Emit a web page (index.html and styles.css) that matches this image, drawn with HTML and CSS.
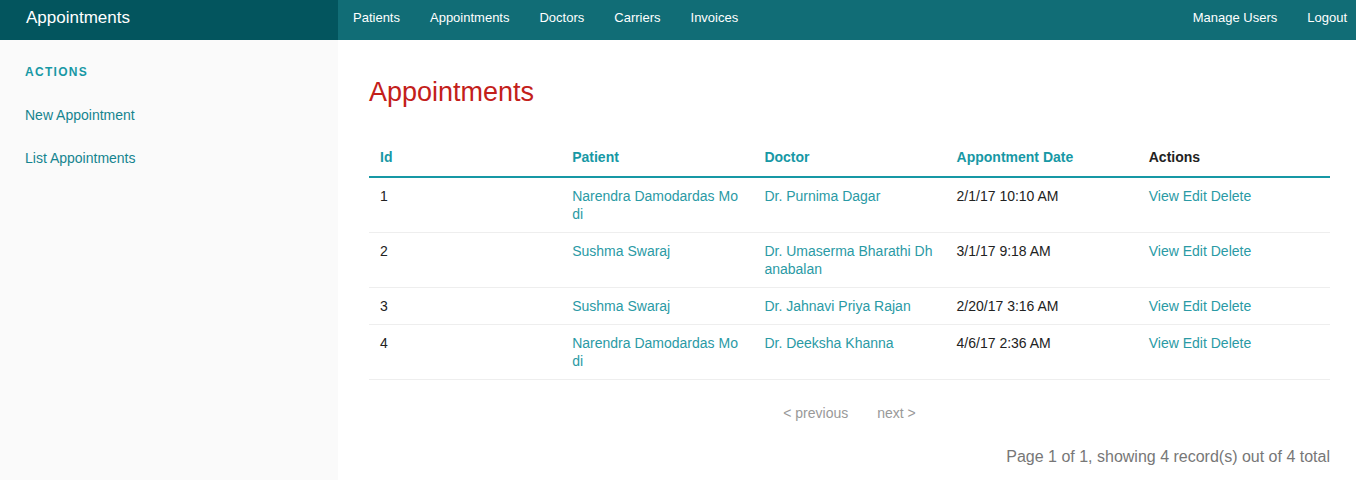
FILE: index.html
```html
<!DOCTYPE html>
<html>
<head>
<meta charset="utf-8">
<title>Appointments</title>
<link rel="stylesheet" href="styles.css">
</head>
<body>
<nav class="top-bar">
  <div class="title-area"><a href="#">Appointments</a></div>
  <div class="bar-section">
    <ul class="nav-left">
      <li><a href="#">Patients</a></li>
      <li><a href="#">Appointments</a></li>
      <li><a href="#">Doctors</a></li>
      <li><a href="#">Carriers</a></li>
      <li><a href="#">Invoices</a></li>
    </ul>
    <ul class="nav-right">
      <li><a href="#">Manage Users</a></li>
      <li class="last"><a href="#">Logout</a></li>
    </ul>
  </div>
</nav>
<div class="layout">
  <aside class="side-nav">
    <div class="heading">Actions</div>
    <a href="#" class="side-link">New Appointment</a>
    <a href="#" class="side-link">List Appointments</a>
  </aside>
  <main class="content">
    <h3 class="page-title">Appointments</h3>
    <table class="data">
      <thead>
        <tr>
          <th><a href="#">Id</a></th>
          <th><a href="#">Patient</a></th>
          <th><a href="#">Doctor</a></th>
          <th><a href="#">Appontment Date</a></th>
          <th class="plain">Actions</th>
        </tr>
      </thead>
      <tbody>
        <tr>
          <td>1</td>
          <td><a href="#">Narendra Damodardas Modi</a></td>
          <td><a href="#">Dr. Purnima Dagar</a></td>
          <td>2/1/17 10:10 AM</td>
          <td><a href="#">View</a> <a href="#">Edit</a> <a href="#">Delete</a></td>
        </tr>
        <tr>
          <td>2</td>
          <td><a href="#">Sushma Swaraj</a></td>
          <td><a href="#">Dr. Umaserma Bharathi Dhanabalan</a></td>
          <td>3/1/17 9:18 AM</td>
          <td><a href="#">View</a> <a href="#">Edit</a> <a href="#">Delete</a></td>
        </tr>
        <tr>
          <td>3</td>
          <td><a href="#">Sushma Swaraj</a></td>
          <td><a href="#">Dr. Jahnavi Priya Rajan</a></td>
          <td>2/20/17 3:16 AM</td>
          <td><a href="#">View</a> <a href="#">Edit</a> <a href="#">Delete</a></td>
        </tr>
        <tr>
          <td>4</td>
          <td><a href="#">Narendra Damodardas Modi</a></td>
          <td><a href="#">Dr. Deeksha Khanna</a></td>
          <td>4/6/17 2:36 AM</td>
          <td><a href="#">View</a> <a href="#">Edit</a> <a href="#">Delete</a></td>
        </tr>
      </tbody>
    </table>
    <div class="paginator">
      <ul class="pagination">
        <li class="disabled">&lt; previous</li>
        <li class="disabled">next &gt;</li>
      </ul>
      <p class="summary">Page 1 of 1, showing 4 record(s) out of 4 total</p>
    </div>
  </main>
</div>
</body>
</html>
```
FILE: styles.css
```css
* { box-sizing: border-box; }
html, body { margin: 0; padding: 0; }
body {
  font-family: "Liberation Sans", Arial, Helvetica, sans-serif;
  font-size: 14px;
  color: #222;
  background: #fff;
}
a { text-decoration: none; }

.top-bar {
  display: flex;
  height: 40px;
  background: #116d76;
}
.title-area {
  width: 338px;
  background: #03555e;
  padding-left: 26px;
}
.title-area a {
  color: #fff;
  font-size: 17px;
  line-height: 35px;
}
.bar-section {
  flex: 1;
  display: flex;
  justify-content: space-between;
}
.bar-section ul {
  list-style: none;
  margin: 0;
  padding: 0;
  display: flex;
}
.bar-section a {
  display: block;
  color: #fff;
  font-size: 13px;
  line-height: 35px;
  padding: 0 15px;
}
.nav-right li.last a { padding-right: 9px; }

.layout {
  display: flex;
  min-height: 440px;
}
.side-nav {
  width: 338px;
  background: #fafafa;
  padding: 24px 25px 0;
  display: flex;
  flex-direction: column;
  align-items: flex-start;
}
.heading {
  color: #1798a5;
  font-size: 12px;
  font-weight: bold;
  text-transform: uppercase;
  letter-spacing: 1.3px;
  line-height: 16px;
  margin-bottom: 26px;
}
.side-link {
  color: #15848f;
  font-size: 14px;
  line-height: 18px;
  margin-bottom: 25px;
}

.content {
  flex: 1;
  padding: 0 26px 0 31px;
}
.page-title {
  color: #c3201a;
  font-weight: normal;
  font-size: 27px;
  line-height: 31px;
  margin: 37px 0 31px;
}
.data {
  width: 100%;
  border-collapse: collapse;
  table-layout: fixed;
}
.data th {
  text-align: left;
  font-weight: bold;
  font-size: 14px;
  line-height: 18px;
  padding: 9px 11px 10px;
  border-bottom: 2px solid #1798a5;
}
.data th a { color: #1798a5; }
.data th.plain { color: #222; }
.data td {
  font-size: 14px;
  line-height: 18px;
  padding: 9px 11px;
  border-bottom: 1px solid #eee;
  vertical-align: top;
  word-break: break-all;
}
.data td a { color: #2a9aa5; }

.paginator { text-align: center; }
.pagination {
  list-style: none;
  margin: 24px 0 0;
  padding: 0;
  display: flex;
  justify-content: center;
  gap: 29px;
  line-height: 18px;
}
.pagination .disabled { color: #999; }
.summary {
  margin: 25px 0 0;
  text-align: right;
  color: #777;
  font-size: 16px;
  line-height: 20px;
}
```
